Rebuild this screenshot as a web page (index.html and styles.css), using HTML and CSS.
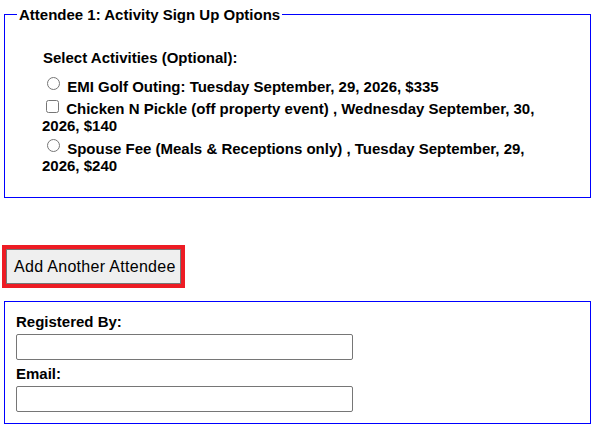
FILE: index.html
```html
<!DOCTYPE html>
<html lang="en">
<head>
    <meta charset="UTF-8">
    <meta name="viewport" content="width=device-width, initial-scale=1.0">
    <title>Event Registration</title>
    <link rel="stylesheet" href="styles.css">
</head>
<body>
    <fieldset class="attendee-box">
        <legend>Attendee 1: Activity Sign Up Options</legend>
        <div class="activities">
            <div class="activities-title">Select Activities (Optional):</div>
            <div class="option">
                <input type="radio" name="golf" id="golf">
                <label for="golf">EMI Golf Outing: Tuesday September, 29, 2026, $335</label>
            </div>
            <div class="option">
                <input type="checkbox" id="pickle">
                <label for="pickle">Chicken N Pickle (off property event) , Wednesday September, 30, 2026, $140</label>
            </div>
            <div class="option">
                <input type="radio" name="spouse" id="spouse">
                <label for="spouse">Spouse Fee (Meals &amp; Receptions only) , Tuesday September, 29, 2026, $240</label>
            </div>
        </div>
    </fieldset>

    <div class="add-row">
        <button class="add-btn" type="button">Add Another Attendee</button>
    </div>

    <fieldset class="contact-box">
        <label class="field-label" for="registered-by">Registered By:</label>
        <input class="text-input" type="text" id="registered-by">
        <label class="field-label" for="email">Email:</label>
        <input class="text-input" type="text" id="email">
    </fieldset>
</body>
</html>
```

FILE: styles.css
```css
body {
    font-family: 'Liberation Sans', Arial, sans-serif;
    margin: 0;
    padding: 6px 0 0 4px;
    color: #000;
    background-color: #fff;
}

fieldset {
    width: 587px;
    box-sizing: border-box;
    margin: 0;
    padding: 0;
    border: 1px solid #0000ff;
}

legend {
    font-size: 15px;
    font-weight: bold;
    line-height: 17px;
    padding: 0 2px;
    margin-left: 12px;
}

.activities {
    font-size: 15px;
    font-weight: bold;
    line-height: 17px;
    padding: 26px 40px 23px 37px;
}

.activities-title {
    margin-left: 1px;
    margin-bottom: 11px;
}

.option {
    margin-bottom: 5px;
}

.option:last-child {
    margin-bottom: 0;
}

.option input {
    width: 13px;
    height: 13px;
    margin: 0 3px 0 5px;
    vertical-align: 2px;
}

.option input[type="checkbox"] {
    margin-left: 4px;
    vertical-align: 1px;
}

.add-row {
    padding: 51px 0 17px 0;
}

.add-btn {
    display: block;
    width: 175px;
    height: 35px;
    box-sizing: border-box;
    font-family: 'Liberation Sans', Arial, sans-serif;
    font-size: 16px;
    letter-spacing: 0.3px;
    text-align: left;
    color: #000;
    background-color: #efefef;
    border: 1px solid #767676;
    border-radius: 0;
    padding: 0 0 0 7px;
    margin-left: 2px;
    outline: 4px solid #ed1c24;
    outline-offset: 0;
}

.contact-box {
    padding: 11px 11px 11px 11px;
}

.field-label {
    display: block;
    font-size: 15px;
    font-weight: bold;
    line-height: 17px;
    margin-bottom: 4px;
}

.text-input {
    display: block;
    width: 337px;
    height: 26px;
    box-sizing: border-box;
    border: 1px solid #767676;
    border-radius: 2px;
    margin: 0 0 5px 0;
}

.text-input:last-child {
    margin-bottom: 0;
}
```
